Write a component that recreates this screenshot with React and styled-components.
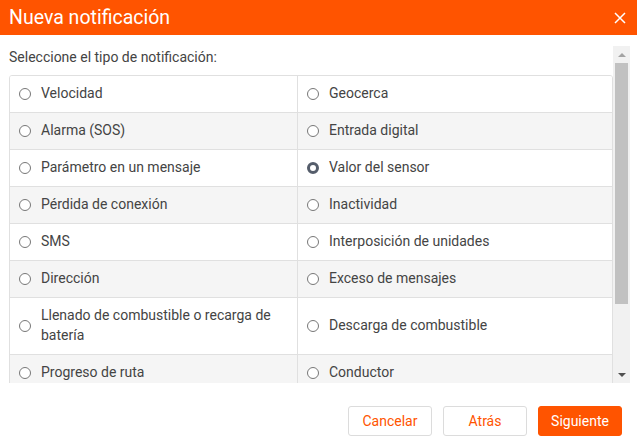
import styled, { createGlobalStyle } from 'styled-components'
import { useState } from 'react'

const GlobalStyle = createGlobalStyle`
  html, body {
    margin: 0;
    padding: 0;
    background: #fff;
    font-family: Roboto, 'Liberation Sans', sans-serif;
  }
  * { box-sizing: border-box; }
`

const types = [
  ['Velocidad', 'Geocerca'],
  ['Alarma (SOS)', 'Entrada digital'],
  ['Parámetro en un mensaje', 'Valor del sensor'],
  ['Pérdida de conexión', 'Inactividad'],
  ['SMS', 'Interposición de unidades'],
  ['Dirección', 'Exceso de mensajes'],
  ['Llenado de combustible o recarga de batería', 'Descarga de combustible'],
  ['Progreso de ruta', 'Conductor'],
  ['Remolque', 'Contraseña'],
  ['Mantenimiento', 'Eventos']
]

export default function App () {
  const [selected, setSelected] = useState('Valor del sensor')
  return (
    <Dialog>
      <GlobalStyle />
      <Header>
        <Title>Nueva notificación</Title>
        <Close aria-label='Cerrar'>
          <svg width='12' height='12' viewBox='0 0 12 12'>
            <path d='M1 1L11 11M11 1L1 11' stroke='#fff' strokeWidth='1.5' />
          </svg>
        </Close>
      </Header>
      <Body>
        <Scroll>
          <Label>Seleccione el tipo de notificación:</Label>
          <Table>
            {types.map((row, i) => (
              <Row key={i} $striped={i % 2 === 1}>
                {row.map(name => (
                  <Cell key={name} onClick={() => setSelected(name)}>
                    <Radio $checked={selected === name} />
                    <span>{name}</span>
                  </Cell>
                ))}
              </Row>
            ))}
          </Table>
        </Scroll>
        <ScrollBar>
          <Arrow><svg width='8' height='4' viewBox='0 0 8 4'><path d='M0 4L4 0L8 4Z' fill='#a3a3a3' /></svg></Arrow>
          <Track>
            <Thumb />
          </Track>
          <Arrow><svg width='8' height='4' viewBox='0 0 8 4'><path d='M0 0L8 0L4 4Z' fill='#505050' /></svg></Arrow>
        </ScrollBar>
      </Body>
      <Footer>
        <Button>Cancelar</Button>
        <Button>Atrás</Button>
        <Button $primary>Siguiente</Button>
      </Footer>
    </Dialog>
  )
}

const Dialog = styled.div`
width: 637px;
height: 441px;
background: #fff;
display: flex;
flex-direction: column;
`
const Header = styled.div`
height: 35px;
flex: none;
background: #ff5400;
display: flex;
align-items: center;
justify-content: space-between;
padding: 0 7px 0 9px;
`
const Title = styled.div`
color: #fff;
font-size: 19.5px;
font-weight: 400;
`
const Close = styled.button`
border: 0;
background: none;
padding: 4px;
display: flex;
cursor: pointer;
`
const Body = styled.div`
display: flex;
height: 337px;
margin: 11px 7px 0 0;
`
const Scroll = styled.div`
flex: 1;
overflow: hidden;
padding-left: 9px;
`
const ScrollBar = styled.div`
width: 17px;
flex: none;
display: flex;
flex-direction: column;
background: #f1f1f1;
`
const Arrow = styled.div`
height: 17px;
display: flex;
align-items: center;
justify-content: center;
`
const Track = styled.div`
flex: 1;
padding: 0 2px;
`
const Thumb = styled.div`
height: 241px;
background: #c1c1c1;
`
const Label = styled.div`
font-size: 14px;
line-height: 20px;
color: #444;
padding-top: 1px;
margin-bottom: 8px;
`
const Table = styled.div`
border: 1px solid #e0e0e0;
border-radius: 3px;
overflow: hidden;
`
const Row = styled.div`
display: grid;
grid-template-columns: 287px 1fr;
background: ${p => p.$striped ? '#f5f5f5' : '#fff'};
& + & {
  border-top: 1px solid #e0e0e0;
}
& > div + div {
  border-left: 1px solid #e0e0e0;
}
`
const Cell = styled.div`
display: flex;
align-items: center;
gap: 10px;
padding: 7px 10px 9px 9px;
min-height: 36px;
font-size: 14px;
line-height: 20px;
color: #444;
cursor: pointer;
`
const Radio = styled.span`
flex: none;
width: 12px;
height: 12px;
margin-top: 2px;
border-radius: 50%;
border: ${p => p.$checked ? '3.5px solid #555d6b' : '1px solid #777'};
background: #fff;
`
const Footer = styled.div`
display: flex;
justify-content: flex-end;
gap: 11px;
padding: 23px 15px 0 0;
`
const Button = styled.button`
width: 84px;
height: 30px;
border-radius: 3px;
border: 1px solid ${p => p.$primary ? '#ff5400' : '#dcdcdc'};
background: ${p => p.$primary ? '#ff5400' : '#fff'};
color: ${p => p.$primary ? '#fff' : '#ff5400'};
font-family: Roboto, 'Liberation Sans', sans-serif;
font-size: 14px;
cursor: pointer;
`
